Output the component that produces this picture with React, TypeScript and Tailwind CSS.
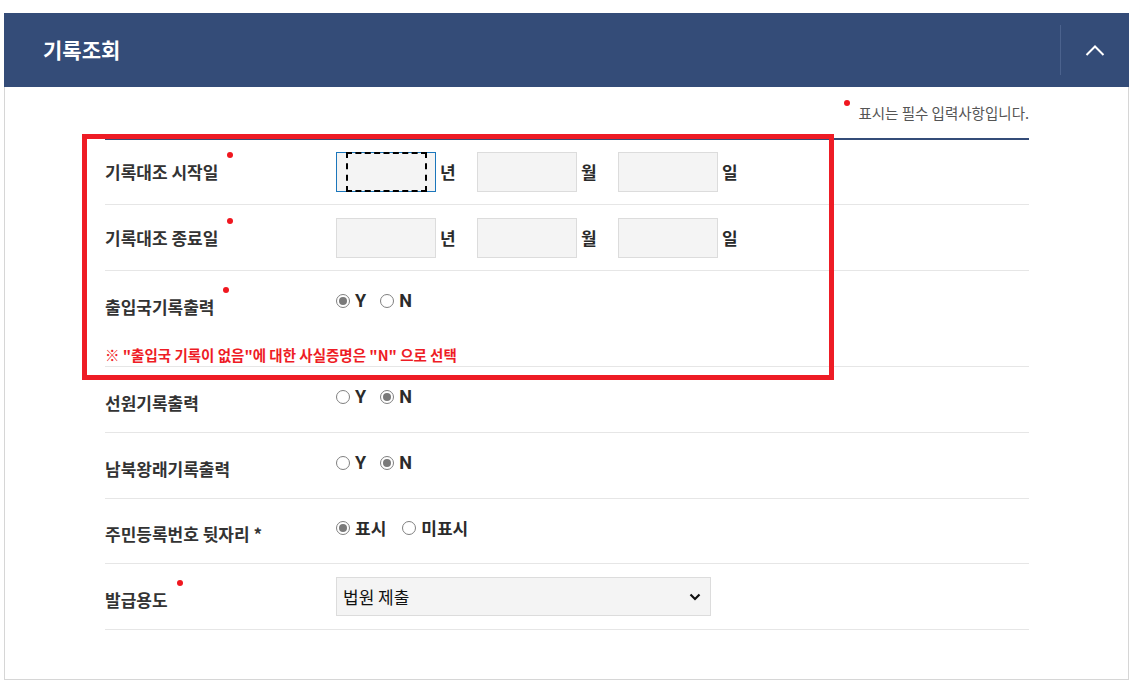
import React from "react";

const Dot = () => (
  <span className="absolute right-[-15px] top-[-8px] w-[6px] h-[6px] rounded-full bg-[#f0171f]" />
);

const Label = ({ text, req, shift }: { text: string; req?: boolean; shift?: boolean }) => (
  <div className={"w-[231px] shrink-0 " + (shift ? "pt-[6px]" : "")}>
    <span className="relative inline-block leading-[24px] text-[17px] font-bold text-[#333]">
      {text}
      {req && <Dot />}
    </span>
  </div>
);

const Circle = ({ checked }: { checked?: boolean }) => (
  <span className="w-[14px] h-[14px] shrink-0 rounded-full border border-[#808080] bg-white flex items-center justify-center">
    {checked && <span className="w-[8px] h-[8px] rounded-full bg-[#7a7a7a]" />}
  </span>
);

const RadioItem = ({ checked, text, latin }: { checked?: boolean; text: string; latin?: boolean }) => (
  <span className="flex items-center gap-[5px]">
    <Circle checked={checked} />
    <span
      className={
        "font-bold text-[#2b2b2b] leading-[20px] " +
        (latin ? "text-[18px] font-['Roboto','Noto_Sans_CJK_KR',sans-serif]" : "text-[17px]")
      }
    >
      {text}
    </span>
  </span>
);

const RadioGroup = ({ items }: { items: { text: string; checked?: boolean; latin?: boolean }[] }) => (
  <div className="flex items-center gap-[14px] pb-[6px]">
    {items.map((it, i) => (
      <RadioItem key={i} {...it} />
    ))}
  </div>
);

const DateGroup = ({ unit, focused }: { unit: string; focused?: boolean }) => (
  <div className="w-[141px] flex items-center">
    <div
      className={
        "relative w-[100px] h-[40px] bg-[#f4f4f4] border " +
        (focused ? "border-[#1b76bb]" : "border-[#dcdcdc]")
      }
    >
      {focused && (
        <span className="absolute left-[9px] right-[8px] top-[-1px] bottom-[-1px] border-2 border-dashed border-black" />
      )}
    </div>
    <span className="ml-[4px] text-[17px] font-bold text-[#2b2b2b] leading-[20px]">{unit}</span>
  </div>
);

const Row = ({ children, h }: { children: React.ReactNode; h: string }) => (
  <div className={"border-b border-[#e6e6e6] flex items-center " + h}>{children}</div>
);

export default function App() {
  return (
    <div className="relative w-[1130px] h-[692px] bg-white font-['Noto_Sans_CJK_KR','Noto_Sans',sans-serif]">
      <div className="pt-[13px] pl-[4px] w-[1129px]">
        {/* header */}
        <div className="h-[74px] bg-[#344c78] flex items-center justify-between pl-[39px]">
          <span className="text-[21px] font-bold text-white">기록조회</span>
          <div className="h-[50px] w-[69px] border-l border-[#4b628d] flex items-center justify-center">
            <svg width="20" height="12" viewBox="0 0 20 12" fill="none">
              <polyline points="1.5,11 10,2.5 18.5,11" stroke="white" strokeWidth="2" />
            </svg>
          </div>
        </div>
        {/* body */}
        <div className="h-[593px] border-x border-b border-[#d6d6d6] pl-[100px] pr-[99px]">
          <div className="h-[53px] flex items-center justify-end border-b-2 border-[#344c78]">
            <span className="relative text-[14.5px] text-[#555] leading-[20px]">
              <span className="absolute left-[-14px] top-[-3px] w-[6px] h-[6px] rounded-full bg-[#f0171f]" />
              표시는 필수 입력사항입니다.
            </span>
          </div>

          <Row h="h-[65px]">
            <Label text="기록대조 시작일" req />
            <div className="flex items-center">
              <DateGroup unit="년" focused />
              <DateGroup unit="월" />
              <DateGroup unit="일" />
            </div>
          </Row>
          <Row h="h-[66px]">
            <Label text="기록대조 종료일" req />
            <div className="flex items-center">
              <DateGroup unit="년" />
              <DateGroup unit="월" />
              <DateGroup unit="일" />
            </div>
          </Row>
          <div className="h-[96px] border-b border-[#e6e6e6]">
            <div className="h-[66px] flex items-center">
              <Label text="출입국기록출력" req shift />
              <RadioGroup
                items={[
                  { text: "Y", checked: true, latin: true },
                  { text: "N", latin: true },
                ]}
              />
            </div>
            <div className="mt-[8px] text-[14.5px] leading-[20px] font-bold text-[#ee1c25]">
              ※ "출입국 기록이 없음"에 대한 사실증명은 "N" 으로 선택
            </div>
          </div>
          <Row h="h-[66px]">
            <Label text="선원기록출력" shift />
            <RadioGroup
              items={[
                { text: "Y", latin: true },
                { text: "N", checked: true, latin: true },
              ]}
            />
          </Row>
          <Row h="h-[66px]">
            <Label text="남북왕래기록출력" shift />
            <RadioGroup
              items={[
                { text: "Y", latin: true },
                { text: "N", checked: true, latin: true },
              ]}
            />
          </Row>
          <Row h="h-[65px]">
            <Label text="주민등록번호 뒷자리 *" shift />
            <div className="flex items-center gap-[16px] pb-[6px]">
              <RadioItem text="표시" checked />
              <RadioItem text="미표시" />
            </div>
          </Row>
          <Row h="h-[66px]">
            <Label text="발급용도" req shift />
            <div className="w-[375px] h-[39px] bg-[#f4f4f4] border border-[#dcdcdc] flex items-center justify-between pl-[6px] pr-[9px]">
              <span className="text-[17px] text-[#111]">법원 제출</span>
              <svg width="12" height="8" viewBox="0 0 12 8" fill="none">
                <polyline points="1.5,1.5 6,6 10.5,1.5" stroke="#111" strokeWidth="2.2" />
              </svg>
            </div>
          </Row>
        </div>
      </div>
      {/* red annotation box */}
      <div className="absolute left-[82px] top-[134px] w-[752px] h-[246px] border-[5px] border-[#ee1c25] pointer-events-none" />
    </div>
  );
}
